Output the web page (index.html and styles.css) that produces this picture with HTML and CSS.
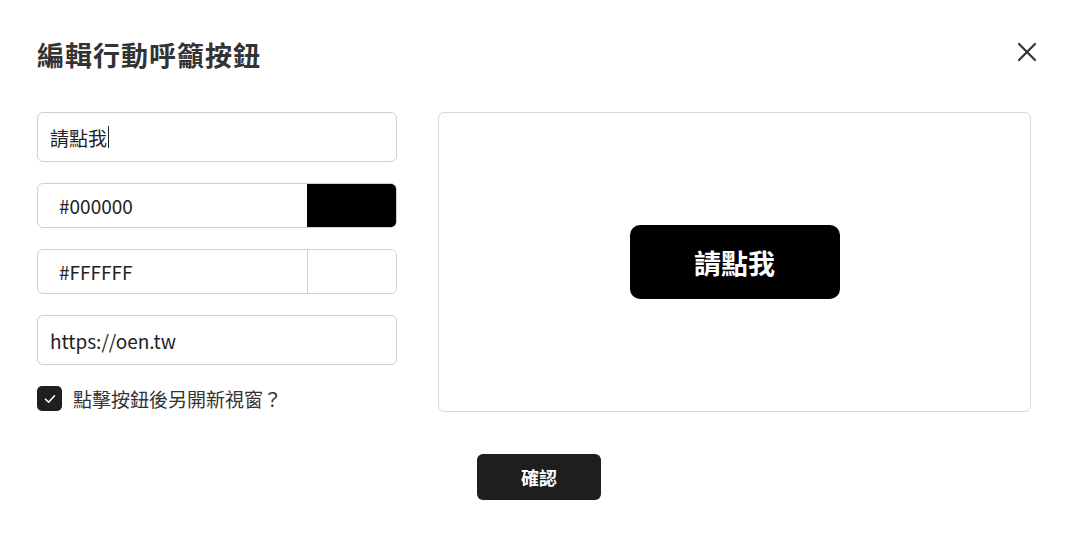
FILE: index.html
```html
<!DOCTYPE html>
<html lang="zh-Hant">
  <head>
    <meta charset="UTF-8" />
    <meta name="viewport" content="width=device-width, initial-scale=1.0" />
    <title>編輯行動呼籲按鈕</title>
    <link rel="stylesheet" href="styles.css">
  </head>
  <body>
    <div class="dialog">
      <!-- Header -->
      <div class="dialog-header">
        <h1>編輯行動呼籲按鈕</h1>
        <button class="close-btn" aria-label="關閉">
          <svg width="20" height="20" viewBox="0 0 20 20">
            <path d="M2 2 L18 18 M18 2 L2 18" stroke="#333" stroke-width="2.2" stroke-linecap="round" fill="none" />
          </svg>
        </button>
      </div>

      <!-- Form + preview -->
      <div class="dialog-body">
        <div class="form-col">
          <div class="field">請點我<span class="caret"></span></div>

          <div class="color-field">
            <span class="color-value">#000000</span>
            <span class="swatch swatch-black"></span>
          </div>

          <div class="color-field">
            <span class="color-value">#FFFFFF</span>
            <span class="swatch"></span>
          </div>

          <div class="field">https://oen.tw</div>

          <label class="check">
            <span class="check-box">
              <svg width="14" height="14" viewBox="0 0 14 14">
                <path d="M2.5 7.2 L5.6 10.2 L11.5 3.8" stroke="#fff" stroke-width="1.6" stroke-linecap="round" stroke-linejoin="round" fill="none" />
              </svg>
            </span>
            點擊按鈕後另開新視窗？
          </label>
        </div>

        <div class="preview">
          <a class="cta" href="#">請點我</a>
        </div>
      </div>

      <!-- Footer -->
      <div class="dialog-footer">
        <button class="confirm-btn">確認</button>
      </div>
    </div>
  </body>
</html>
```

FILE: styles.css
```css
body {
  margin: 0;
  background-color: #fff;
  color: #222;
  font-family: "Noto Sans CJK TC", "Noto Sans", sans-serif;
}

.dialog {
  width: 1080px;
  height: 540px;
  box-sizing: border-box;
  padding: 38px 49px 0 37px;
}

.dialog-header {
  display: flex;
  justify-content: space-between;
  align-items: flex-start;
}

.dialog-header h1 {
  margin: 0;
  font-size: 27px;
  line-height: 34px;
  font-weight: 700;
  color: #333;
  letter-spacing: 1px;
}

.close-btn {
  width: 28px;
  height: 28px;
  margin-right: -10px;
  padding: 0;
  border: none;
  background: transparent;
  display: flex;
  align-items: center;
  justify-content: center;
  cursor: pointer;
}

.dialog-body {
  display: flex;
  gap: 41px;
  margin-top: 40px;
}

.form-col {
  width: 360px;
  display: flex;
  flex-direction: column;
  gap: 21px;
}

.field {
  height: 50px;
  box-sizing: border-box;
  border: 1px solid #d0d0d0;
  border-radius: 6px;
  padding: 0 12px;
  display: flex;
  align-items: center;
  font-size: 19px;
  color: #222;
}

.caret {
  display: inline-block;
  width: 1px;
  height: 22px;
  background-color: #222;
  margin-left: 1px;
}

.color-field {
  height: 45px;
  box-sizing: border-box;
  border: 1px solid #d0d0d0;
  border-radius: 6px;
  display: flex;
  overflow: hidden;
}

.color-value {
  flex: 1;
  display: flex;
  align-items: center;
  padding-left: 21px;
  font-size: 19px;
  color: #222;
}

.swatch {
  width: 88px;
  border-left: 1px solid #d0d0d0;
  background-color: #fff;
}

.swatch-black {
  background-color: #000;
  border-left-color: #000;
}

.check {
  display: flex;
  align-items: center;
  gap: 11px;
  font-size: 19px;
  color: #333;
  height: 25px;
}

.check-box {
  width: 25px;
  height: 25px;
  border-radius: 5px;
  background-color: #1f1f1f;
  display: flex;
  align-items: center;
  justify-content: center;
}

.preview {
  flex: 1;
  height: 300px;
  box-sizing: border-box;
  border: 1px solid #d8d8d8;
  border-radius: 6px;
  display: flex;
  align-items: center;
  justify-content: center;
}

.cta {
  width: 210px;
  height: 74px;
  border-radius: 10px;
  background-color: #000;
  color: #fff;
  font-size: 27px;
  font-weight: 700;
  text-decoration: none;
  display: flex;
  align-items: center;
  justify-content: center;
}

.dialog-footer {
  display: flex;
  justify-content: center;
  margin-top: 42px;
  padding-left: 10px;
}

.confirm-btn {
  width: 124px;
  height: 46px;
  border: none;
  border-radius: 6px;
  background-color: #1e1e1e;
  color: #fff;
  font-family: inherit;
  font-size: 18px;
  font-weight: 700;
  cursor: pointer;
}
```
